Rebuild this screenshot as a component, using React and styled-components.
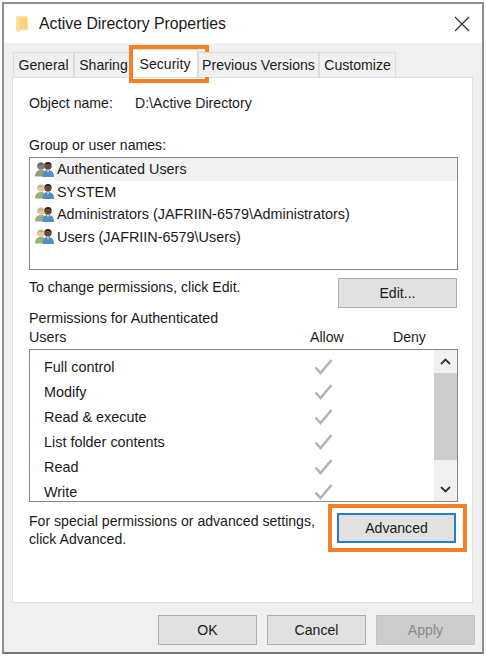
import React from 'react';
import styled, { createGlobalStyle } from 'styled-components';

const Global = createGlobalStyle`
  html, body { margin: 0; background: #fff; }
  * { box-sizing: border-box; }
`;

const Dialog = styled.div`
  width: 482px;
  height: 652px;
  margin: 2px;
  border: 2px solid #8f8f8f;
  border-bottom-color: #7a7a7a;
  background: #f0f0f0;
  display: flex;
  flex-direction: column;
  font-family: "Liberation Sans", Arial, sans-serif;
  font-size: 14.1px;
  color: #1a1a1a;
`;
const TitleBar = styled.div`
  height: 39px;
  flex: none;
  background: #fff;
  display: flex;
  align-items: center;
  padding: 0 12px 0 11px;
`;
const Title = styled.div`
  margin-left: 10px;
  font-size: 15.8px;
  flex: 1;
`;
const Body = styled.div`
  flex: 1;
  display: flex;
  flex-direction: column;
  padding: 9px 7px 0 8px;
`;
const TabRow = styled.div`
  display: flex;
  height: 25px;
  padding-left: 1px;
  position: relative;
  z-index: 1;
`;
const Tab = styled.div`
  position: relative;
  height: ${p => (p.$active ? '28px' : '25px')};
  margin-top: ${p => (p.$active ? '-3px' : '0')};
  width: ${p => p.$w}px;
  background: ${p => (p.$active ? '#fff' : '#f0f0f0')};
  border: 1px solid #dcdcdc;
  border-bottom: none;
  margin-left: ${p => (p.$active ? '-1px' : '0')};
  display: flex;
  align-items: center;
  justify-content: center;
  white-space: nowrap;
  overflow: visible;
`;
const Highlight = styled.div`
  position: absolute;
  border: 4px solid #f58025;
  top: ${p => p.$t}px;
  left: ${p => p.$l}px;
  right: ${p => p.$r}px;
  bottom: ${p => p.$b}px;
  pointer-events: none;
`;
const Panel = styled.div`
  width: 461px;
  height: 526px;
  background: #fff;
  border: 1px solid #dfdfdf;
  padding: 16px 15px 0 16px;
  display: flex;
  flex-direction: column;
`;
const NameRow = styled.div`
  display: flex;
  height: 18px;
  align-items: center;
`;
const NameLabel = styled.div`
  width: 106px;
`;
const Label = styled.div`
  margin-top: ${p => p.$mt || 0}px;
  height: 18px;
  line-height: 18px;
`;
const ListBox = styled.div`
  width: 429px;
  height: ${p => p.$h}px;
  margin-top: ${p => p.$mt || 0}px;
  border: 1px solid #828790;
  position: relative;
  overflow: hidden;
  flex: none;
`;
const UserRow = styled.div`
  display: flex;
  align-items: center;
  height: 22.5px;
  padding-left: 5px;
`;
const UserName = styled.div`
  flex: 1;
  height: 100%;
  font-size: 14.4px;
  line-height: 22.5px;
  padding-left: 2px;
  white-space: nowrap;
  background: ${p => (p.$selected ? '#f2f2f2' : 'transparent')};
`;
const EditRow = styled.div`
  display: flex;
  justify-content: space-between;
  align-items: flex-start;
  margin-top: 8px;
`;
const PushButton = styled.button`
  position: relative;
  font: inherit;
  color: ${p => (p.$disabled ? '#8a8a8a' : '#1a1a1a')};
  width: ${p => p.$w}px;
  height: ${p => p.$h}px;
  margin-top: ${p => p.$mt || 0}px;
  background: ${p => (p.$disabled ? '#cccccc' : '#e1e1e1')};
  border: ${p => (p.$focus ? '2px solid #2b7cc9' : p.$disabled ? '1px solid #c4c4c4' : '1px solid #adadad')};
  padding: 0;
`;
const PermHeader = styled.div`
  display: flex;
  align-items: flex-end;
  margin-top: 2px;
  height: 37px;
  line-height: 19px;
`;
const PermTitle = styled.div`
  width: 281px;
  font-size: 14.3px;
`;
const Column = styled.div`
  width: ${p => p.$w}px;
  height: 19px;
`;
const PermBox = styled(ListBox)`
  display: flex;
`;
const PermList = styled.div`
  flex: 1;
  padding-top: 4px;
`;
const PermRow = styled.div`
  display: flex;
  align-items: center;
  height: 25px;
  padding-left: 14px;
`;
const PermName = styled.div`
  width: 270px;
  font-size: 14.4px;
`;
const ScrollBar = styled.div`
  width: 23px;
  background: #f0f0f0;
  display: flex;
  flex-direction: column;
  flex: none;
`;
const ScrollArrow = styled.div`
  height: 23px;
  display: flex;
  align-items: center;
  justify-content: center;
  flex: none;
`;
const ScrollThumb = styled.div`
  height: 87px;
  background: #cdcdcd;
  flex: none;
`;
const ScrollTrack = styled.div`
  flex: 1;
`;
const AdvancedRow = styled.div`
  display: flex;
  justify-content: space-between;
  margin-top: 10px;
  padding-right: 1px;
`;
const AdvancedText = styled.div`
  line-height: 18px;
`;
const Footer = styled.div`
  display: flex;
  justify-content: flex-end;
  gap: 10px;
  margin-top: 12px;
`;

const FolderIcon = () => (
  <svg width="14" height="18" viewBox="0 0 14 18">
    <path d="M1 1h10l2 1v13H5v2H2l-1-1z" fill="#fde29a" />
    <path d="M4 3h8v11H4z" fill="#f8d47c" />
  </svg>
);

const CloseIcon = () => (
  <svg width="16" height="16" viewBox="0 0 16 16">
    <path d="M1 1l14 14M15 1L1 15" stroke="#333" strokeWidth="1.2" fill="none" />
  </svg>
);

const UsersIcon = ({ gray }) => (
  <svg width="20" height="17" viewBox="0 0 20 17" style={{ flex: 'none' }}>
    <circle cx="6" cy="5" r="3.8" fill={gray ? '#7c7f7c' : '#dcc9a4'} />
    <path d="M2.500 7c-1-6 7-6 7 0l-1-3H3.500z" fill={gray ? '#5c605c' : '#b8a47a'} />
    <path d="M0 15.500c0-4 2-6.500 6-6.500s5 2.500 5 6.500z" fill={gray ? '#8da07a' : '#9aae78'} />
    <circle cx="13" cy="5" r="3.7" fill="#6b4a30" />
    <path d="M9.500 4c0-4 7-4 7 0l-1.500-1h-4z" fill="#23262c" />
    <path d="M7.500 16c0-5 2-7 5.500-7s6 2 6 7z" fill="#4f8fc8" />
    <path d="M12 9h2l-1 3z" fill="#d6e6f4" />
  </svg>
);

const Check = () => (
  <svg width="19" height="17" viewBox="0 0 19 17">
    <path d="M1.500 9.500l5 5.500L17.500 2" stroke="#b4b4b4" strokeWidth="2.6" fill="none" />
  </svg>
);

const Chevron = ({ up }) => (
  <svg width="11" height="7" viewBox="0 0 11 7">
    <path d={up ? 'M1 6l4.500-4.500L10 6' : 'M1 1l4.500 4.500L10 1'} stroke="#333" strokeWidth="1.8" fill="none" />
  </svg>
);

const users = [
  'Authenticated Users',
  'SYSTEM',
  'Administrators (JAFRIIN-6579\\Administrators)',
  'Users (JAFRIIN-6579\\Users)',
];
const perms = ['Full control', 'Modify', 'Read & execute', 'List folder contents', 'Read', 'Write'];

export default function App() {
  return (
    <Dialog>
      <Global />
      <TitleBar>
        <FolderIcon />
        <Title>Active Directory Properties</Title>
        <CloseIcon />
      </TitleBar>
      <Body>
        <TabRow>
          <Tab $w={61}>General</Tab>
          <Tab $w={59}>Sharing</Tab>
          <Tab $w={66} $active>
            Security
            <Highlight $t={-5} $l={-4} $r={-12} $b={-6} />
          </Tab>
          <Tab $w={121}>Previous Versions</Tab>
          <Tab $w={77}>Customize</Tab>
        </TabRow>
        <Panel>
          <NameRow>
            <NameLabel>Object name:</NameLabel>
            <div>D:\Active Directory</div>
          </NameRow>
          <Label $mt={24}>Group or user names:</Label>
          <ListBox $h={113} $mt={3}>
            {users.map((u, i) => (
              <UserRow key={u}>
                <UsersIcon gray={i === 0} />
                <UserName $selected={i === 0}>{u}</UserName>
              </UserRow>
            ))}
          </ListBox>
          <EditRow>
            <Label>To change permissions, click Edit.</Label>
            <PushButton $w={119} $h={30}>Edit...</PushButton>
          </EditRow>
          <PermHeader>
            <PermTitle>Permissions for Authenticated<br />Users</PermTitle>
            <Column $w={83}>Allow</Column>
            <Column $w={50}>Deny</Column>
          </PermHeader>
          <PermBox $h={153} $mt={2}>
            <PermList>
              {perms.map(p => (
                <PermRow key={p}>
                  <PermName>{p}</PermName>
                  <Check />
                </PermRow>
              ))}
            </PermList>
            <ScrollBar>
              <ScrollArrow><Chevron up /></ScrollArrow>
              <ScrollThumb />
              <ScrollTrack />
              <ScrollArrow><Chevron /></ScrollArrow>
            </ScrollBar>
          </PermBox>
          <AdvancedRow>
            <AdvancedText>For special permissions or advanced settings,<br />click Advanced.</AdvancedText>
            <PushButton $w={119} $h={30} $mt={1} $focus>
              Advanced
              <Highlight $t={-11} $l={-11} $r={-13} $b={-11} />
            </PushButton>
          </AdvancedRow>
        </Panel>
        <Footer>
          <PushButton $w={99} $h={30}>OK</PushButton>
          <PushButton $w={99} $h={30}>Cancel</PushButton>
          <PushButton $w={99} $h={30} $disabled>Apply</PushButton>
        </Footer>
      </Body>
    </Dialog>
  );
}
